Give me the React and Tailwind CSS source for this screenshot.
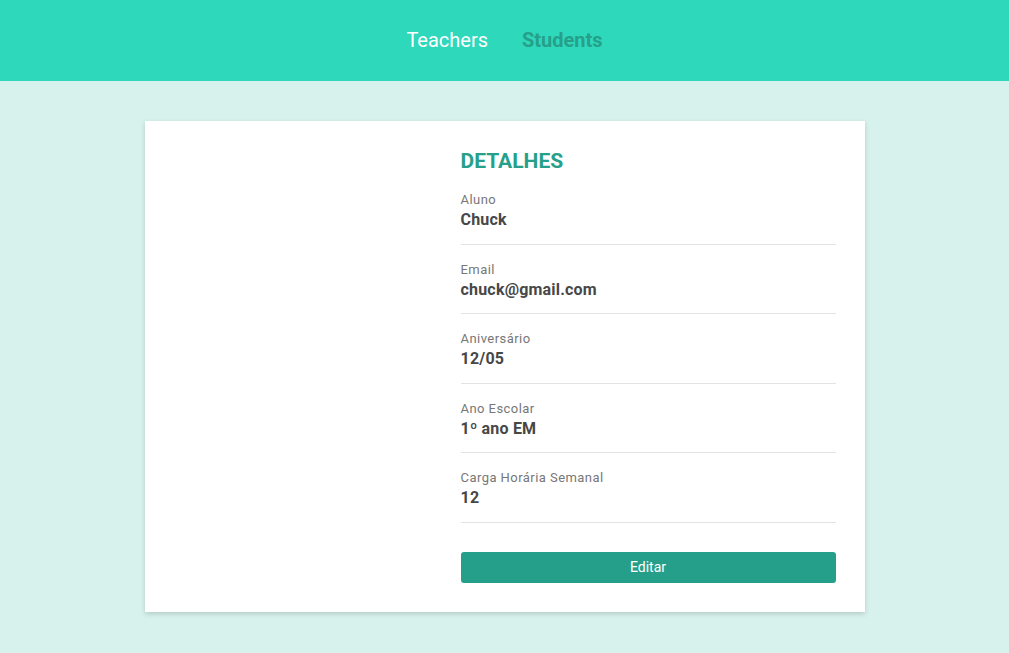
import React from 'react';

const details = [
  { label: 'Aluno', value: 'Chuck' },
  { label: 'Email', value: 'chuck@gmail.com' },
  { label: 'Aniversário', value: '12/05' },
  { label: 'Ano Escolar', value: '1º ano EM' },
  { label: 'Carga Horária Semanal', value: '12' },
];

const App = () => {
  return (
    <div className="min-h-[653px] bg-[#d7f2ec] font-['Roboto',sans-serif]">
      {/* Top nav */}
      <header className="h-[81px] bg-[#2ed8bb] flex items-center justify-center gap-[34px] text-[20px] pb-[2px]">
        <a className="text-white cursor-pointer">Teachers</a>
        <a className="text-[#26a08a] font-bold cursor-pointer">Students</a>
      </header>

      <main className="flex justify-center pt-10 pb-10">
        <div className="w-[720px] bg-white shadow-[0_2px_5px_rgba(0,0,0,0.16)] flex pt-[26px] pb-[29px]">
          <div className="w-[316px]" />
          <div className="w-[375px]">
            <h2 className="pt-[1px] text-[21px] leading-[27px] font-bold text-[#26a08a]">DETALHES</h2>
            {details.map((item) => (
              <div key={item.label} className="pt-[16px] pb-[12.5px] border-b border-[#e3e3e3]">
                <p className="text-[13px] leading-[18px] tracking-[0.45px] text-[#777]">{item.label}</p>
                <p className="text-[16px] leading-[22px] font-bold tracking-[0.2px] text-[#474747]">{item.value}</p>
              </div>
            ))}
            <button className="mt-[29px] w-full h-[31px] rounded-[3px] bg-[#269f8a] text-white text-[14px]">
              Editar
            </button>
          </div>
        </div>
      </main>
    </div>
  );
};

export default App;
